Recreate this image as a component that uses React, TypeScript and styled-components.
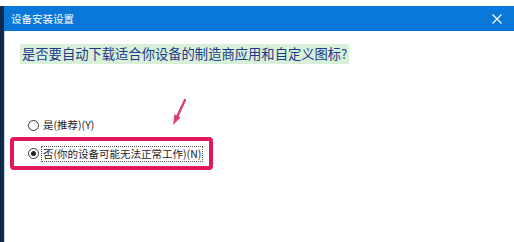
import React from "react";
import styled, { createGlobalStyle } from "styled-components";

const Global = createGlobalStyle`
  html, body { margin: 0; padding: 0; background: #ffffff; }
  body { font-family: "Noto Sans CJK SC", "Liberation Sans", sans-serif; }
`;

const Page = styled.div`
  width: 514px;
  height: 242px;
  display: flex;
  flex-direction: column;
  background: #ffffff;
  overflow: hidden;
  position: relative;
`;

const TopStrip = styled.div`
  height: 6px;
  flex: none;
  background: #ffffff;
`;

const Window = styled.div`
  flex: 1;
  display: flex;
  flex-direction: row;
`;

const LeftEdge = styled.div`
  width: 4px;
  flex: none;
  background: #0e2a4e;
  border-right: 1px solid #c9d6e4;
`;

const Main = styled.div`
  flex: 1;
  display: flex;
  flex-direction: column;
`;

const TitleBar = styled.div`
  height: 25px;
  flex: none;
  background: #0a78d8;
  display: flex;
  align-items: center;
  justify-content: space-between;
  padding: 0 12px 0 7px;
  color: #ffffff;
  font-size: 10.5px;
  margin-left: -1px;
`;

const Title = styled.span`
  letter-spacing: 0px;
`;

const Close = styled.svg`
  width: 10px;
  height: 10px;
`;

const Content = styled.div`
  flex: 1;
  display: flex;
  flex-direction: column;
  padding: 9px 0 0 0;
`;

const Heading = styled.div`
  padding-left: 15px;
`;

const Highlight = styled.span`
  display: inline-block;
  background: #d8efd8;
  color: #1b3a8c;
  font-size: 13.3px;
  line-height: 20px;
  height: 20px;
  padding: 0 2px;
`;

const Options = styled.div`
  margin-top: 54px;
  display: flex;
  flex-direction: column;
  gap: 5px;
`;

const Option = styled.div<{ $indent: number }>`
  display: flex;
  align-items: center;
  gap: 2px;
  padding-left: ${(p) => p.$indent}px;
  height: 14px;
  font-size: 10.5px;
  color: #1e1e1e;
`;

const Radio = styled.span<{ $checked?: boolean }>`
  width: 9px;
  height: 9px;
  border-radius: 50%;
  border: 1px solid #3a3a3a;
  background: #ffffff;
  display: flex;
  align-items: center;
  justify-content: center;
  flex: none;
  &::after {
    content: "";
    display: ${(p) => (p.$checked ? "block" : "none")};
    width: 5px;
    height: 5px;
    border-radius: 50%;
    background: #222222;
  }
`;

const Label = styled.span<{ $focused?: boolean }>`
  border: 1px dotted ${(p) => (p.$focused ? "#555555" : "transparent")};
  padding: 0 1px;
  line-height: 14px;
`;

const Annotation = styled.div`
  margin-left: 5px;
  width: 195px;
  height: 25px;
  border: 4px solid #e2175c;
  border-radius: 4px;
  display: flex;
  align-items: center;
`;

const Arrow = styled.svg`
  position: absolute;
  left: 168px;
  top: 97px;
  width: 22px;
  height: 32px;
`;

export default function App() {
  return (
    <>
      <Global />
      <Page>
        <TopStrip />
        <Window>
          <LeftEdge />
          <Main>
            <TitleBar>
              <Title>设备安装设置</Title>
              <Close viewBox="0 0 10 10">
                <path d="M0.5 0.5 L9.5 9.5 M9.5 0.5 L0.5 9.5" stroke="#ffffff" strokeWidth="1.2" />
              </Close>
            </TitleBar>
            <Content>
              <Heading>
                <Highlight>是否要自动下载适合你设备的制造商应用和自定义图标?</Highlight>
              </Heading>
              <Options>
                <Option $indent={23}>
                  <Radio />
                  <Label>是(推荐)(Y)</Label>
                </Option>
                <Annotation>
                  <Option $indent={14}>
                    <Radio $checked />
                    <Label $focused>否(你的设备可能无法正常工作)(N)</Label>
                  </Option>
                </Annotation>
              </Options>
            </Content>
          </Main>
        </Window>
        <Arrow viewBox="0 0 22 32">
          <path d="M17 3 L9 20" stroke="#e23a70" strokeWidth="2.4" strokeLinecap="round" />
          <path d="M5 28 L6.5 17 L12.5 20.5 Z" fill="#e23a70" />
        </Arrow>
      </Page>
    </>
  );
}
